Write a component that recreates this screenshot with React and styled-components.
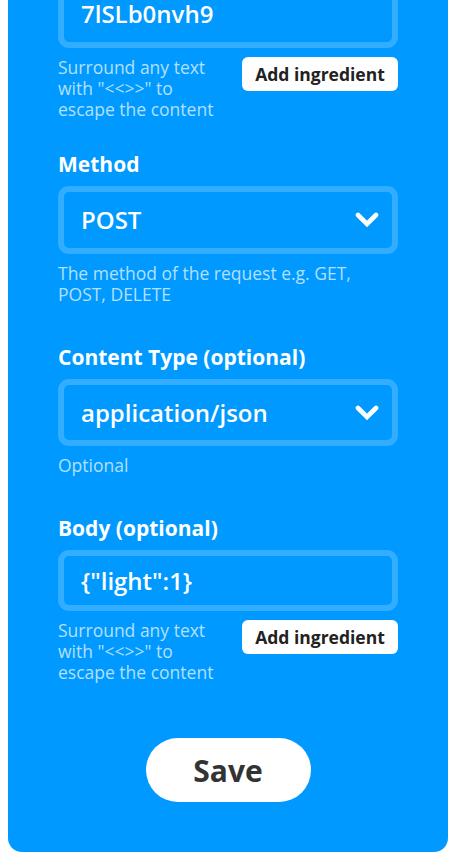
import React from "react";
import styled, { createGlobalStyle } from "styled-components";

const GlobalStyle = createGlobalStyle`
  html, body { margin: 0; padding: 0; background: #ffffff; }
  body { font-family: "Open Sans", "Liberation Sans", sans-serif; }
  * { box-sizing: border-box; }
`;

const Panel = styled.div`
  width: 440px;
  margin: -20px 0 0 8px;
  background: #0099ff;
  border-radius: 0 0 14px 14px;
  padding: 0 50px 50px;
  display: flex;
  flex-direction: column;
`;

const Field = styled.div`
  display: flex;
  flex-direction: column;
  margin-top: ${(p) => p.$top || 0}px;
`;

const Label = styled.div`
  font-family: "Open Sans", sans-serif;
  font-weight: 700;
  font-size: 21px;
  line-height: 26px;
  color: #ffffff;
  margin-bottom: 9px;
`;

const InputBox = styled.div`
  position: relative;
  height: ${(p) => p.$h || 68}px;
  border: 6px solid #33adff;
  border-radius: 11px;
  display: flex;
  align-items: center;
  padding: 0 50px 0 17px;
  font-family: "Open Sans", sans-serif;
  font-weight: 600;
  font-size: 24px;
  line-height: 24px;
  color: #ffffff;
`;

const Chevron = styled.svg`
  position: absolute;
  right: 13px;
  top: 50%;
  transform: translateY(-50%);
`;

const Helper = styled.div`
  font-family: "Open Sans", sans-serif;
  font-size: 17.5px;
  line-height: 21px;
  color: #b3e0ff;
  margin-top: 9px;
`;

const HelperRow = styled.div`
  display: flex;
  align-items: flex-start;
  justify-content: space-between;
  gap: 16px;
  margin-top: 9px;
`;

const HelperText = styled.div`
  flex: 1;
  font-family: "Open Sans", sans-serif;
  font-size: 17.5px;
  line-height: 21px;
  color: #b3e0ff;
`;

const IngredientButton = styled.button`
  flex: 0 0 156px;
  height: 34px;
  border: none;
  border-radius: 6px;
  background: #ffffff;
  color: #222222;
  font-family: "Open Sans", sans-serif;
  font-weight: 700;
  font-size: 17.5px;
  padding: 0;
  cursor: pointer;
`;

const SaveButton = styled.button`
  align-self: center;
  margin-top: 55px;
  width: 165px;
  height: 64px;
  border: none;
  border-radius: 32px;
  background: #ffffff;
  color: #333333;
  font-family: "Open Sans", sans-serif;
  font-weight: 700;
  font-size: 30px;
  cursor: pointer;
`;

const ChevronIcon = () => (
  <Chevron width="24" height="16" viewBox="0 0 24 16">
    <polyline
      points="3,3 12,12 21,3"
      fill="none"
      stroke="#ffffff"
      strokeWidth="4.6"
      strokeLinecap="round"
      strokeLinejoin="miter"
    />
  </Chevron>
);

const IngredientHelp = () => (
  <HelperRow>
    <HelperText>Surround any text with "&lt;&lt;&gt;&gt;" to escape the content</HelperText>
    <IngredientButton>Add ingredient</IngredientButton>
  </HelperRow>
);

export default function App() {
  return (
    <>
      <GlobalStyle />
      <Panel>
        <Field>
          <InputBox>7lSLb0nvh9</InputBox>
          <IngredientHelp />
        </Field>
        <Field $top={31}>
          <Label>Method</Label>
          <InputBox>
            POST
            <ChevronIcon />
          </InputBox>
          <Helper>The method of the request e.g. GET, POST, DELETE</Helper>
        </Field>
        <Field $top={39}>
          <Label>Content Type (optional)</Label>
          <InputBox $h={67}>
            application/json
            <ChevronIcon />
          </InputBox>
          <Helper>Optional</Helper>
        </Field>
        <Field $top={39}>
          <Label>Body (optional)</Label>
          <InputBox $h={61}>{'{"light":1}'}</InputBox>
          <IngredientHelp />
        </Field>
        <SaveButton>Save</SaveButton>
      </Panel>
    </>
  );
}
